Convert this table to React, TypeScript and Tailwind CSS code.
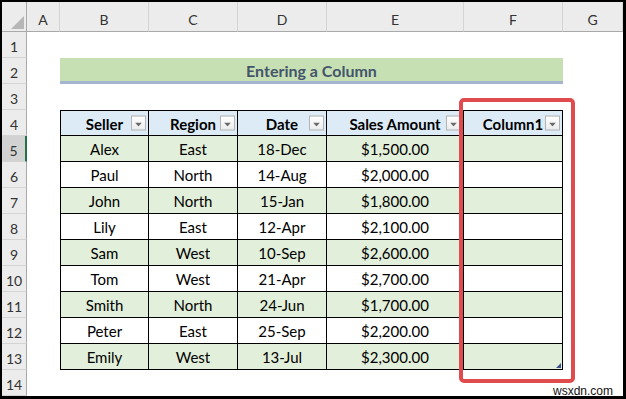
import React from "react";

const cols = ["A", "B", "C", "D", "E", "F", "G"];
const data = [
  ["Alex", "East", "18-Dec", "$1,500.00"],
  ["Paul", "North", "14-Aug", "$2,000.00"],
  ["John", "North", "15-Jan", "$1,800.00"],
  ["Lily", "East", "12-Apr", "$2,100.00"],
  ["Sam", "West", "10-Sep", "$2,600.00"],
  ["Tom", "West", "21-Apr", "$2,700.00"],
  ["Smith", "North", "24-Jun", "$1,700.00"],
  ["Peter", "East", "25-Sep", "$2,200.00"],
  ["Emily", "West", "13-Jul", "$2,300.00"],
];
const headers = ["Seller", "Region", "Date", "Sales Amount", "Column1"];

function Dropdown() {
  return (
    <div className="absolute right-[2px] top-1/2 -translate-y-1/2 w-[15px] h-[15px] border border-[#b4b4b4] bg-gradient-to-b from-white to-[#ececec] flex items-center justify-center">
      <svg width="7" height="4" viewBox="0 0 7 4" className="mt-[3px]">
        <polygon points="0,0 7,0 3.5,4" fill="#6b6b6b" />
      </svg>
    </div>
  );
}

export default function App() {
  const font = { fontFamily: "Lato, 'Open Sans', sans-serif" };
  return (
    <div className="w-[626px] h-[399px] bg-black pt-[2px] pl-[2px] overflow-hidden" style={font}>
      <div className="relative w-[621px] h-[394px] bg-white grid grid-cols-[25px_33px_89px_89px_89px_137px_99px_60px] grid-rows-[30px_repeat(14,26px)]">
        {/* corner */}
        <div className="bg-[#ececec] border-r border-b border-[#a9a9a9] relative">
          <svg width="13" height="13" viewBox="0 0 13 13" className="absolute right-[2px] bottom-[2px]">
            <polygon points="13,0 13,13 0,13" fill="#b6b6b6" />
          </svg>
        </div>
        {cols.map((c) => (
          <div
            key={c}
            className="bg-[#ececec] border-r border-b border-r-[#d4d4d4] border-b-[#a9a9a9] flex items-center justify-center text-[14px] text-[#333] pt-[5px]"
          >
            {c}
          </div>
        ))}
        {Array.from({ length: 14 }, (_, i) => {
          const r = i + 1;
          return (
            <div
              key={`rh${r}`}
              className={`flex items-center justify-center text-[14px] text-[#333] border-b border-[#d4d4d4] pt-[4px] ${
                r === 5 ? "bg-[#d2d2d2] border-r-2 border-r-[#217346]" : "bg-[#ececec] border-r border-r-[#a9a9a9]"
              }`}
              style={{ gridColumn: 1, gridRow: r + 1 }}
            >
              {r}
            </div>
          );
        })}
        {/* title row 2 */}
        <div
          className="bg-[#c6e0b4] border-b-[3px] border-[#a3b5cf] flex items-center justify-center text-[16px] font-bold text-[#44546a] pt-[2px]"
          style={{ gridColumn: "3 / 8", gridRow: 3 }}
        >
          Entering a Column
        </div>
        {/* table header row 4 */}
        {headers.map((h, j) => (
          <div
            key={h}
            className={`relative bg-[#ddebf7] border-t border-b border-r border-black flex items-center justify-center text-[15px] font-bold text-black pt-[2px] ${
              j === 0 ? "border-l" : ""
            }`}
            style={{ gridColumn: j + 3, gridRow: 5 }}
          >
            {h}
            <Dropdown />
          </div>
        ))}
        {data.map((row, i) =>
          [...row, ""].map((v, j) => (
            <div
              key={`${i}-${j}`}
              className={`relative border-b border-r border-black flex items-center justify-center text-[15px] text-black pt-[2px] ${
                j === 0 ? "border-l" : ""
              } ${i % 2 === 0 ? "bg-[#e2efda]" : "bg-white"}`}
              style={{ gridColumn: j + 3, gridRow: i + 6 }}
            >
              {v}
              {i === 8 && j === 4 && (
                <svg width="5" height="5" viewBox="0 0 5 5" className="absolute right-[1px] bottom-[1px]">
                  <polygon points="5,0 5,5 0,5" fill="#3b4f8a" />
                </svg>
              )}
            </div>
          ))
        )}
        {/* red highlight */}
        <div className="absolute left-[457px] top-[96px] w-[116px] h-[285px] border-[4px] border-[#e04b4e] rounded-[5px] pointer-events-none" />
        {/* watermark */}
        <div
          className="absolute left-[551px] top-[383px] text-[12px] leading-[13px] text-[#111]"
          style={{ fontFamily: "'Liberation Sans', Arial, sans-serif" }}
        >
          wsxdn.com
        </div>
      </div>
    </div>
  );
}
